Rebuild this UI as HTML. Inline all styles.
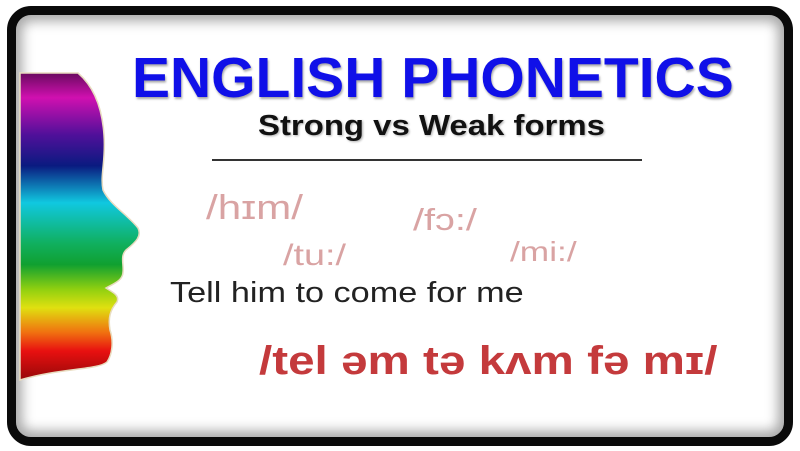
<!DOCTYPE html>
<html><head><meta charset="utf-8"><style>
*{margin:0;padding:0}
body{width:800px;height:451px;background:#fff;position:relative;overflow:hidden;font-family:"Liberation Sans",Arial,sans-serif}
.frame{position:absolute;left:7px;top:6px;width:786px;height:440px;box-sizing:border-box;border:9px solid #0a0a0a;border-radius:24px;background:#fff;box-shadow:inset 0 0 12px 6px rgba(0,0,0,.35)}
.t{position:absolute;white-space:nowrap;line-height:1;transform-origin:0 0}
</style></head><body>
<div class="frame"></div>
<svg style="position:absolute;left:0;top:0" width="800" height="451">
<defs><linearGradient id="g" x1="0" y1="73" x2="0" y2="382" gradientUnits="userSpaceOnUse">
<stop offset="0" stop-color="#6a0a60"/><stop offset=".08" stop-color="#d010b0"/><stop offset=".2" stop-color="#50109a"/><stop offset=".3" stop-color="#0a1a80"/><stop offset=".42" stop-color="#10c8e0"/><stop offset=".55" stop-color="#10b060"/><stop offset=".62" stop-color="#10a030"/><stop offset=".7" stop-color="#90d010"/><stop offset=".76" stop-color="#e0e010"/><stop offset=".84" stop-color="#f07010"/><stop offset=".9" stop-color="#e81010"/><stop offset="1" stop-color="#900808"/></linearGradient></defs>
<path d="M20 73 L78 73 C92 85 102 105 104 135 C106 160 100 175 103 190 C110 205 128 215 138 228 C142 236 136 242 126 250 C120 256 124 265 123 272 C123 280 115 283 106 288 C112 292 120 295 117 302 C110 310 108 318 110 330 C114 342 112 355 107 362 C98 370 60 368 20 380 Z" fill="url(#g)" stroke="#e8dcc0" stroke-width="1.5"/>
</svg>
<div class="t" style="left:132px;top:50px;font-size:57px;font-weight:bold;color:#1010e8;text-shadow:1px 2px 2px rgba(0,0,0,.35)">ENGLISH PHONETICS</div>
<div class="t" style="left:258px;top:112px;font-size:29px;font-weight:bold;color:#111;text-shadow:1px 1px 2px rgba(0,0,0,.3);transform:scaleX(1.135)">Strong vs Weak forms</div>
<div style="position:absolute;left:212px;top:159px;width:430px;height:2px;background:#333"></div>
<div class="t" style="left:206px;top:191px;font-size:34px;color:#d9a3a3;transform:scaleX(1.24)">/hɪm/</div>
<div class="t" style="left:413px;top:204px;font-size:31px;color:#d9a3a3;transform:scaleX(1.28)">/fɔ:/</div>
<div class="t" style="left:283px;top:241px;font-size:30px;color:#d9a3a3;transform:scaleX(1.26)">/tu:/</div>
<div class="t" style="left:510px;top:238px;font-size:28px;color:#d9a3a3;transform:scaleX(1.26)">/mi:/</div>
<div class="t" style="left:170px;top:279px;font-size:29px;color:#222;transform:scaleX(1.18)">Tell him to come for me</div>
<div class="t" style="left:259px;top:341px;font-size:40px;font-weight:bold;color:#c43a3c;transform:scaleX(1.19)">/tel əm tə kʌm fə mɪ/</div>
</body></html>
